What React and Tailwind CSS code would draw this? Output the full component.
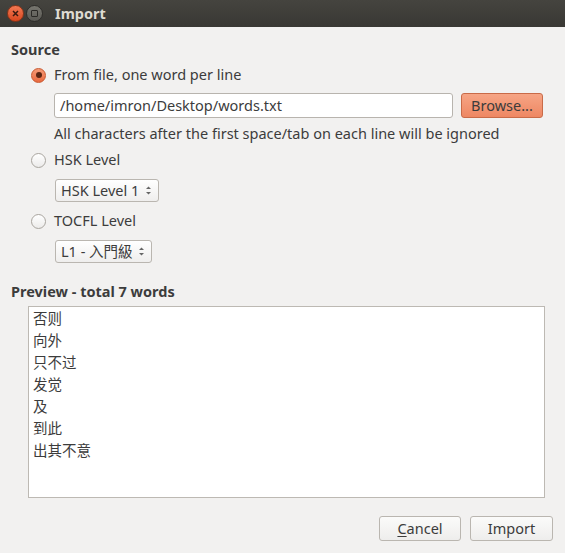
const words = ["否则", "向外", "只不过", "发觉", "及", "到此", "出其不意"];

const Radio = ({ checked }) =>
  checked ? (
    <span className="w-[15px] h-[15px] rounded-full border border-[#c9582f] bg-gradient-to-b from-[#f59a76] to-[#e8693f] flex items-center justify-center">
      <span className="w-[6px] h-[6px] rounded-full bg-[#5a2614]" />
    </span>
  ) : (
    <span className="w-[15px] h-[15px] rounded-full border border-[#a9a59f] bg-gradient-to-b from-white to-[#ecebea]" />
  );

const Spin = ({ label, width }) => (
  <div
    className={`${width} h-[23px] rounded-[3px] border border-[#bab6b0] bg-gradient-to-b from-white to-[#efeeed] flex items-center pl-[5px] pr-[6px]`}
  >
    <span className="flex-1 whitespace-nowrap">{label}</span>
    <svg width="7" height="11" viewBox="0 0 7 11" className="text-[#666]">
      <path d="M1 4 L3.5 1.5 L6 4 Z" fill="currentColor" />
      <path d="M1 7 L3.5 9.5 L6 7 Z" fill="currentColor" />
    </svg>
  </div>
);

export default function App() {
  return (
    <div className="w-[565px] h-[553px] bg-[#f2f1f0] flex flex-col text-[14.5px] text-[#3c3c3c] font-['Noto_Sans','Noto_Sans_CJK_SC',sans-serif] overflow-hidden">
      {/* title bar */}
      <div className="h-[27px] shrink-0 bg-gradient-to-b from-[#45443f] to-[#393834] flex items-center pl-[7px]">
        <span className="w-[17px] h-[17px] rounded-full bg-gradient-to-b from-[#f37852] to-[#d8461c] border border-[#8a3418] flex items-center justify-center">
          <svg width="7" height="7" viewBox="0 0 7 7">
            <path d="M1 1 L6 6 M6 1 L1 6" stroke="#3a1a10" strokeWidth="1.5" />
          </svg>
        </span>
        <span className="ml-[2px] w-[17px] h-[17px] rounded-full bg-gradient-to-b from-[#77766f] to-[#5a5954] border border-[#2e2d2a] flex items-center justify-center">
          <span className="w-[7px] h-[7px] border border-[#2a2926] rounded-[1px]" />
        </span>
        <span className="ml-[12px] font-bold text-[#dfdbd2]">Import</span>
      </div>

      <div className="flex-1 flex flex-col px-[11px]">
        <div className="mt-[12px] h-[22px] flex items-center font-bold">Source</div>

        <div className="mt-[3px] h-[22px] flex items-center pl-[20px] gap-[8px]">
          <Radio checked />
          <span>From file, one word per line</span>
        </div>

        <div className="mt-[7px] flex gap-[8px] pl-[43px]">
          <div className="w-[399px] h-[25px] bg-white border border-[#b8b4ae] rounded-[3px] flex items-center px-[5px]">
            /home/imron/Desktop/words.txt
          </div>
          <div className="w-[82px] h-[25px] rounded-[3px] border border-[#c96b48] bg-gradient-to-b from-[#f6a585] to-[#ee8763] flex items-center justify-center">
            Browse...
          </div>
        </div>

        <div className="mt-[5px] h-[22px] flex items-center pl-[43px]">
          All characters after the first space/tab on each line will be ignored
        </div>

        <div className="mt-[4px] h-[22px] flex items-center pl-[20px] gap-[8px]">
          <Radio />
          <span>HSK Level</span>
        </div>

        <div className="mt-[8px] pl-[44px]">
          <Spin label="HSK Level 1" width="w-[104px]" />
        </div>

        <div className="mt-[8px] h-[22px] flex items-center pl-[20px] gap-[8px]">
          <Radio />
          <span>TOCFL Level</span>
        </div>

        <div className="mt-[8px] pl-[44px]">
          <Spin label="L1 - 入門級" width="w-[97px]" />
        </div>

        <div className="mt-[18px] h-[22px] flex items-center font-bold">Preview - total 7 words</div>

        <div className="mt-[3px] ml-[17px] w-[517px] h-[192px] bg-white border border-[#bdb9b3] pt-[1px] pl-[4px]">
          {words.map((w) => (
            <div key={w} className="h-[22px] flex items-center">
              {w}
            </div>
          ))}
        </div>

        <div className="mt-[18px] flex justify-end gap-[9px] pr-[1px]">
          <div className="w-[82px] h-[25px] rounded-[3px] border border-[#bab6b0] bg-gradient-to-b from-[#fbfbfa] to-[#eeedec] flex items-center justify-center">
            <span>
              <span className="underline underline-offset-2">C</span>ancel
            </span>
          </div>
          <div className="w-[83px] h-[25px] rounded-[3px] border border-[#bab6b0] bg-gradient-to-b from-[#fbfbfa] to-[#eeedec] flex items-center justify-center">
            Import
          </div>
        </div>
      </div>
    </div>
  );
}
